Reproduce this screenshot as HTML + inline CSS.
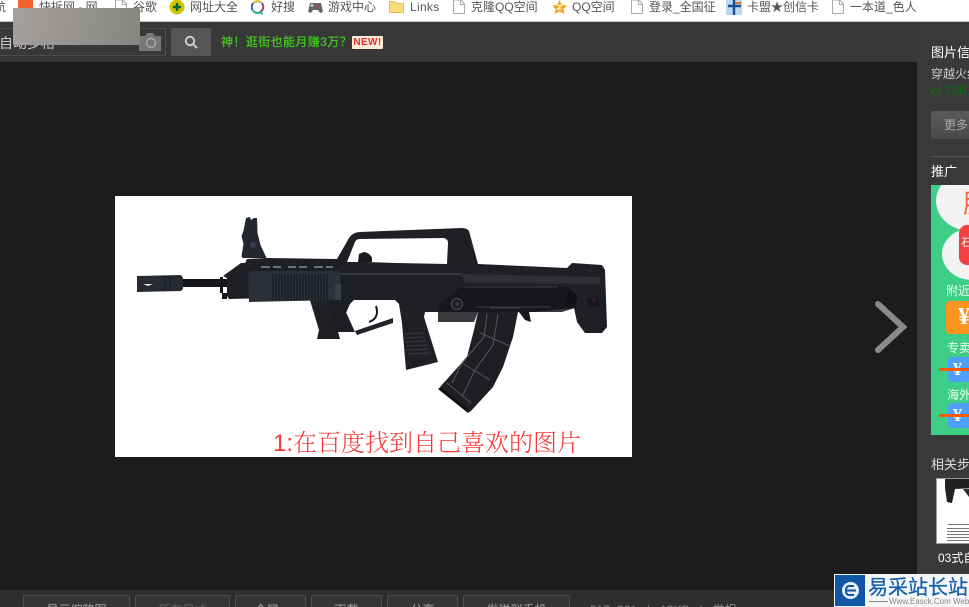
<!DOCTYPE html>
<html><head><meta charset="utf-8"><style>
html,body{margin:0;padding:0;background:#1c1c1c}
#p{position:relative;width:969px;height:607px;overflow:hidden;background:#1c1c1c;font-family:"Liberation Sans","Noto Sans CJK SC",sans-serif;font-size:12px}
.a{position:absolute;white-space:nowrap;line-height:16px}
.b{color:#555;top:-1px}
.f{position:absolute;top:0}
.btn{position:absolute;top:595px;height:24px;border:1px solid #4d4d4d;border-radius:2px;background:#353535;color:#aaa;text-align:center;line-height:29px;box-sizing:border-box}
</style></head><body><div id="p">
<div class="a" style="left:0;top:0;width:969px;height:21px;background:#fff"></div>
<div class="a" style="left:0;top:21px;width:969px;height:1px;background:#c8c8c8"></div>
<span class="a b" style="left:-6px">航</span>
<div class="a" style="left:18px;top:0;width:15px;height:9px;background:#f0642c"></div>
<span class="a b" style="left:39px">快拆网 - 网</span>
<svg class="f" style="left:115px" width="12" height="14"><path d="M.5 0v13.500h11V4L8 0z" fill="#fff" stroke="#aaa"/><path d="M7.500 0v4.500h4" fill="none" stroke="#aaa"/></svg><span class="a b" style="left:133px">谷歌</span>
<svg class="a" style="left:169px;top:0" width="17" height="16"><circle cx="8" cy="7" r="7.500" fill="#d3c400"/><path d="M8 3v8M4 7h8" stroke="#063" stroke-width="2.400"/></svg>
<span class="a b" style="left:190px">网址大全</span>
<svg class="a" style="left:250px;top:0" width="16" height="16"><circle cx="7.500" cy="7" r="5.800" fill="none" stroke="#35b" stroke-width="1.800"/><path d="M3 3a6 6 0 0 1 9 0" stroke="#ec3" stroke-width="1.800" fill="none"/><path d="M13 5a6 6 0 0 1-2 6" stroke="#d36" stroke-width="1.800" fill="none"/><path d="M2.500 10a6 6 0 0 0 8 2.500l2 2" stroke="#3b7" stroke-width="1.800" fill="none"/></svg>
<span class="a b" style="left:271px">好搜</span>
<svg class="a" style="left:307px;top:0" width="17" height="14"><path d="M1 12 3 3h11l2 9-3 1-2-3H6l-2 3z" fill="#666"/><circle cx="12" cy="5.500" r="1.200" fill="#d33"/><circle cx="5" cy="5.500" r="1.400" fill="#ddd"/></svg>
<span class="a b" style="left:328px">游戏中心</span>
<svg class="a" style="left:389px;top:0" width="15" height="14"><path d="M.5 12.500V1.500h5l2 2h7v9z" fill="#fbdc7d" stroke="#e3bd5c"/></svg>
<span class="a b" style="left:410px;letter-spacing:.3px">Links</span>
<svg class="f" style="left:453px" width="12" height="14"><path d="M.5 0v13.500h11V4L8 0z" fill="#fff" stroke="#aaa"/><path d="M7.500 0v4.500h4" fill="none" stroke="#aaa"/></svg><span class="a b" style="left:471px">克隆QQ空间</span>
<svg class="a" style="left:552px;top:0" width="15" height="14"><path d="M7.500 0 10 5l5 .6-3.600 3.400 1 5-4.900-2.500L2.600 14l1-5L0 5.600 5 5z" fill="#f5a623"/><path d="M5.500 5.500h4l-4 3.500h4" stroke="#fff" fill="none"/></svg>
<span class="a b" style="left:572px">QQ空间</span>
<svg class="f" style="left:631px" width="12" height="14"><path d="M.5 0v13.500h11V4L8 0z" fill="#fff" stroke="#aaa"/><path d="M7.500 0v4.500h4" fill="none" stroke="#aaa"/></svg><span class="a b" style="left:649px">登录_全国征</span>
<div class="a" style="left:726px;top:0;width:16px;height:15px;background:#bcd8f0"></div>
<svg class="a" style="left:726px;top:0" width="16" height="15"><path d="M8 0v15M2 6h13" stroke="#14509c" stroke-width="2.400"/><path d="M9 3h6" stroke="#ee6a28" stroke-width="2"/></svg>
<span class="a b" style="left:747px">卡盟★创信卡</span>
<svg class="f" style="left:832px" width="12" height="14"><path d="M.5 0v13.500h11V4L8 0z" fill="#fff" stroke="#aaa"/><path d="M7.500 0v4.500h4" fill="none" stroke="#aaa"/></svg><span class="a b" style="left:850px">一本道_色人</span>

<div class="a" style="left:0;top:22px;width:917px;height:40px;background:#383838"></div>
<div class="a" style="left:-2px;top:28px;width:168px;height:28px;border:1px solid #4c4c4c;box-sizing:border-box"></div>
<span class="a" style="left:-1px;top:35px;color:#ccc;font-size:14px">自动多格</span>
<svg class="a" style="left:139px;top:33px" width="22" height="18"><path d="M0 3h6l2-3h6l2 3h6v15H0z" fill="#777"/><circle cx="12" cy="10" r="4.500" fill="#777" stroke="#aaa" stroke-width="1.400"/></svg>
<div class="a" style="left:13px;top:8px;width:127px;height:37px;background:linear-gradient(100deg,#a5a09e,#8f8e8a 70%,#868682)"></div>
<div class="a" style="left:171px;top:28px;width:40px;height:28px;background:#555"></div>
<svg class="a" style="left:184px;top:35px" width="15" height="14"><circle cx="6" cy="6" r="4.200" fill="none" stroke="#ccc" stroke-width="2"/><path d="M9 9l4 4" stroke="#ccc" stroke-width="2"/></svg>
<span class="a" style="left:221px;top:34px;color:#44cc22;letter-spacing:.4px;-webkit-text-stroke:.2px #44cc22">神！逛街也能月赚3万？</span>
<div class="a" style="left:352px;top:36px;width:31px;height:13px;background:#fdebd8;border-radius:1px;color:#e0342c;font:bold 10px/13px 'Liberation Sans',sans-serif;text-align:center;letter-spacing:.4px">NEW!</div>

<div class="a" style="left:115px;top:196px;width:517px;height:261px;background:#fff"></div>
<svg class="a" style="left:0;top:0" width="969" height="607">
<!-- barrel and muzzle -->
<path d="M183 279h64v8h-64z" fill="#14161a"/>
<path d="M220 277h3v2h0v14h4v6h-5v-6h-2z" fill="#14161a"/>
<path d="M137 276l44-1 2 3v11l-2 2-44 1z" fill="#262a31"/>
<path d="M143 284h10l-5 2z" fill="#eee"/>
<path d="M165 276v15M170 276v15" stroke="#14161a"/>
<!-- front sight -->
<path d="M246 218l4-1 1 3 3-2 3 0 .5 15 3 12 6 13h-24l-1-2 2-12-2-8 2-5z" fill="#232830"/>
<circle cx="253" cy="245" r="3" fill="#39404a"/>
<!-- body silhouette -->
<path d="M241 263h4l2-4 20-1 70 1 12-21q4-6 11-6l102-4q5 0 7 3l9 33 89 4 5-5 30 2 3 5 2 57-5 6h-17l-8-11-3-14-40 4h-109l-1 5 14 45-32 8-4-47-3-19-4-4h-41l-4 4-4 9-9 15 3 11h-23l2-9-10-33-80 2-2-3v-18l-4-2z" fill="#1e2025"/>
<!-- strut -->
<path d="M355 331l38-13v5l-36 12z" fill="#202228"/>
<!-- window -->
<path d="M347 262l8-20q1-3 5-3l84-1q4 1 4 5l-1 21-50-1-30-1z" fill="#fff"/>
<path d="M358 262l1-8 5-2q6 1 8 6v4z" fill="#1a1b1f"/>
<!-- handguard -->
<path d="M248 274l3-3h88v29l-90 2z" fill="#2a2f38"/>
<path d="M272 273h68v27h-68z" fill="#2c3038"/>
<g stroke="#13151a" stroke-width="1.100"><path d="M273 274v26M276 274v26M279 274v26M282 274v26M285 274v26M288 274v26M291 274v26M294 274v26M297 274v26M300 274v26M303 274v26M306 274v26M309 274v26M312 274v26M315 274v26M318 274v26M321 274v26M324 274v26M327 274v26"/></g>
<path d="M335 284h6v16h-6z" fill="#3a3f47"/>
<path d="M261 267h9M273 267h8M288 267h8M299 267h8M314 267h9M326 267h7" stroke="#8a8d92" stroke-width="1.500"/>
<!-- front grip detail and trigger -->
<path d="M328 302l20-1-3 9 10 22h-18z" fill="#1c1e24"/>
<path d="M376 306c3 9-1 14-7 16" fill="none" stroke="#16171a" stroke-width="2"/>
<!-- upper panels -->
<path d="M340 274h122" stroke="#3e4047" stroke-width="1.500"/>
<path d="M461 274l139 3 0 7-135-1z" fill="#2e3035"/>
<path d="M463 285l106 2 8 10-2 11-13 4h-84l-4 10h-36v-16z" fill="#15161a" opacity=".85"/>
<path d="M463 287h95M475 307h75M490 308h30" stroke="#3a3b40"/>
<circle cx="457" cy="304" r="5.500" fill="#1c1d21" stroke="#484a4f" stroke-width="1.200"/><circle cx="457" cy="304" r="2" fill="#333"/>
<circle cx="571" cy="298" r="6" fill="#0f1013"/><path d="M587 298h12v9h-12z" fill="#15161a"/><circle cx="594" cy="300" r="2" fill="#3a2020"/>
<!-- rear grip ribs -->
<g stroke="#3a3c42"><path d="M404 334l19-1M404 338l20-1M405 342l21-1M405 346l22-1M406 350l23-1M407 354l23-1"/></g>
<!-- mag catch -->
<path d="M519 312l10 0 2 10-6-2z" fill="#15161a"/>
<!-- magazine -->
<path d="M478 312h40l-5 25-10 30-10 20-23 25-30-25 27-30 7-27z" fill="#1e1f24"/>
<path d="M441 387l29 24-2 2-30-24z" fill="#0f1013"/>
<g stroke="#55565a" stroke-width="1" fill="none"><path d="M487 314l-3 23-22 26-10 20M498 314l-5 31-18 25-13 27"/><path d="M480 333l30 13M462 363l28 17M447 383l24 20"/></g>
<path d="M878 304l25 23-25 23" fill="none" stroke="#8a8a8a" stroke-width="6" stroke-linecap="round"/>
</svg>
<span class="a" style="left:273px;top:427px;color:#f83838;font:24px/28px 'Liberation Sans',sans-serif">1:<span style="font-family:'Noto Serif CJK SC',serif;font-weight:300">在百度找到自己喜欢的图片</span></span>

<div class="a" style="left:917px;top:22px;width:52px;height:585px;background:#393939"></div>
<span class="a" style="left:931px;top:45px;color:#fff;font-size:13px">图片信息</span>
<span class="a" style="left:931px;top:66px;color:#ccc">穿越火线</span>
<span class="a" style="left:931px;top:83px;color:#0c6e0c;font-size:13px">cf.766.com</span>
<div class="a" style="left:931px;top:111px;width:50px;height:28px;background:linear-gradient(#5a5a5a,#4a4a4a);border-radius:2px;color:#aaa;line-height:28px;text-indent:13px">更多</div>
<div class="a" style="left:931px;top:156px;width:38px;height:1px;background:#585858"></div>
<span class="a" style="left:931px;top:164px;color:#fff;font-size:13px">推广</span>
<div class="a" style="left:931px;top:185px;width:38px;height:250px;background:#3ecf87;overflow:hidden">
<div class="a" style="left:5px;top:-14px;width:70px;height:60px;border-radius:50%;background:#f3f3f3"></div>
<div class="a" style="left:11px;top:43px;width:60px;height:52px;border-radius:50%;background:#f3f3f3"></div>
<span class="a" style="left:32px;top:4px;color:#f06a28;font-size:26px;line-height:30px">服</span>
<div class="a" style="left:28px;top:40px;width:20px;height:40px;border-radius:8px;background:#f04040;color:#fff;font-size:11px;line-height:36px;text-indent:2px">石</div>
<span class="a" style="left:15px;top:98px;color:#f0fff4">附近</span>
<div class="a" style="left:15px;top:116px;width:30px;height:33px;border-radius:4px;background:#fd9420;color:#fff;font:bold 24px/33px 'Liberation Serif',serif;text-indent:12px">¥</div>
<span class="a" style="left:16px;top:155px;color:#f0fff4">专卖</span>
<div class="a" style="left:17px;top:172px;width:30px;height:25px;border-radius:4px;background:#4d9ffb;color:#fff;font:bold 18px/25px 'Liberation Serif',serif;text-indent:5px">¥</div>
<span class="a" style="left:16px;top:202px;color:#f0fff4">海外</span>
<div class="a" style="left:17px;top:218px;width:30px;height:25px;border-radius:4px;background:#4d9ffb;color:#fff;font:bold 18px/25px 'Liberation Serif',serif;text-indent:5px">¥</div>
</div>
<div class="a" style="left:939px;top:368px;width:30px;height:3px;background:#fa5a0a"></div>
<div class="a" style="left:939px;top:414px;width:30px;height:3px;background:#fa5a0a"></div>
<span class="a" style="left:931px;top:457px;color:#ddd;font-size:13px">相关步骤</span>
<div class="a" style="left:936px;top:478px;width:40px;height:66px;background:#fff;border:1px solid #999;box-sizing:border-box;overflow:hidden">
<svg width="40" height="66"><path d="M8 0h32v9l-22 1-3 14-5-1-2-14z" fill="#222"/><path d="M26 10h14v15l-8-7z" fill="#2a2a2a"/><g fill="#777"><rect x="11" y="45" width="22" height="1"/><rect x="10" y="49" width="24" height="1"/><rect x="10" y="52" width="24" height="1"/><rect x="10" y="55" width="24" height="1"/><rect x="10" y="58" width="22" height="1"/><rect x="10" y="61" width="24" height="1"/></g></svg></div>
<span class="a" style="left:938px;top:550px;color:#fff">03式自动</span>

<div class="a" style="left:0;top:590px;width:917px;height:17px;background:#2e2e2e"></div>
<div class="btn" style="left:23px;width:107px">显示缩略图</div>
<div class="btn" style="left:135px;width:95px;color:#666">所有尺寸</div>
<div class="btn" style="left:235px;width:71px">全屏 ▪</div>
<div class="btn" style="left:311px;width:71px">下载</div>
<div class="btn" style="left:387px;width:71px">分享</div>
<div class="btn" style="left:463px;width:107px">发送到手机</div>
<span class="a" style="left:590px;top:602px;color:#888">517×261 &nbsp; | &nbsp; 13KB &nbsp; | &nbsp; 举报</span>

<div class="a" style="left:834px;top:574px;width:135px;height:33px;background:#f4f6f8"></div>
<div class="a" style="left:835px;top:575px;width:30px;height:31px;background:#0f56a6"></div>
<svg class="a" style="left:841px;top:581px" width="19" height="19"><circle cx="9.500" cy="9.500" r="8.500" fill="#e8eef5"/><path d="M6 9.500h9M13 5H8q-3 0-3 4.500T8 14h5" stroke="#0f56a6" stroke-width="2" fill="none"/></svg>
<span class="a" style="left:868px;top:575px;color:#1560ab;font-size:20px;line-height:26px;-webkit-text-stroke:.3px #1560ab">易采站长站</span>
<span class="a" style="left:889px;top:597px;color:#888;font-size:8px;line-height:10px">Www.Easck.Com Webmaster</span>
<div class="a" style="left:869px;top:601px;width:19px;height:1px;background:#888"></div>
</div></body></html>
